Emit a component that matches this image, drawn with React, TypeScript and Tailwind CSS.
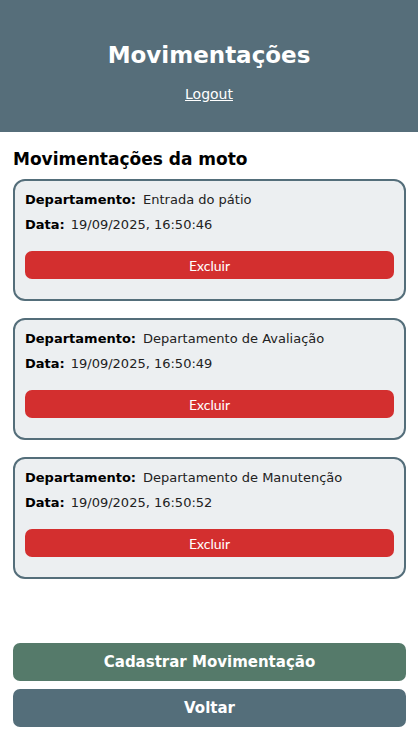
import React from "react";

const items = [
  { dep: "Entrada do pátio", data: "19/09/2025, 16:50:46" },
  { dep: "Departamento de Avaliação", data: "19/09/2025, 16:50:49" },
  { dep: "Departamento de Manutenção", data: "19/09/2025, 16:50:52" },
];

export default function App() {
  return (
    <div
      className="min-h-screen bg-white text-black"
      style={{ fontFamily: '"DejaVu Sans", "Open Sans", sans-serif' }}
    >
      <header className="bg-[#566e7a] h-[132px] flex flex-col items-center pt-[40px] text-white">
        <h1 className="text-[23px] leading-[30px] font-bold">Movimentações</h1>
        <a href="#" className="mt-[15px] text-[14px] leading-[18px] underline">
          Logout
        </a>
      </header>
      <main className="pl-[13px] pr-[12px]">
        <h2 className="mt-[16px] text-[17px] leading-[22px] font-bold">Movimentações da moto</h2>
        <div className="mt-[9px] flex flex-col gap-[17px]">
          {items.map((it) => (
            <div
              key={it.data}
              className="border-2 border-[#546e7a] rounded-[12px] bg-[#eceff1] px-[10px] pt-[10px] pb-[20px]"
            >
              <p className="text-[13px] leading-[18px]">
                <span className="font-bold">Departamento:</span>
                <span className="ml-[7px] text-[#222]">{it.dep}</span>
              </p>
              <p className="mt-[7px] text-[13px] leading-[18px]">
                <span className="font-bold">Data:</span>
                <span className="ml-[6px] text-[#222]">{it.data}</span>
              </p>
              <button
                className="mt-[17px] w-full h-[28px] rounded-[7px] bg-[#d32f2f] text-white text-[14px]"
                style={{ fontFamily: 'Lato, sans-serif' }}
              >
                Excluir
              </button>
            </div>
          ))}
        </div>
        <div className="mt-[64px] flex flex-col gap-[8px]">
          <button className="h-[38px] rounded-[7px] bg-[#557a6a] text-white font-bold text-[15px]">
            Cadastrar Movimentação
          </button>
          <button className="h-[38px] rounded-[7px] bg-[#546e7a] text-white font-bold text-[15px]">
            Voltar
          </button>
        </div>
      </main>
    </div>
  );
}
